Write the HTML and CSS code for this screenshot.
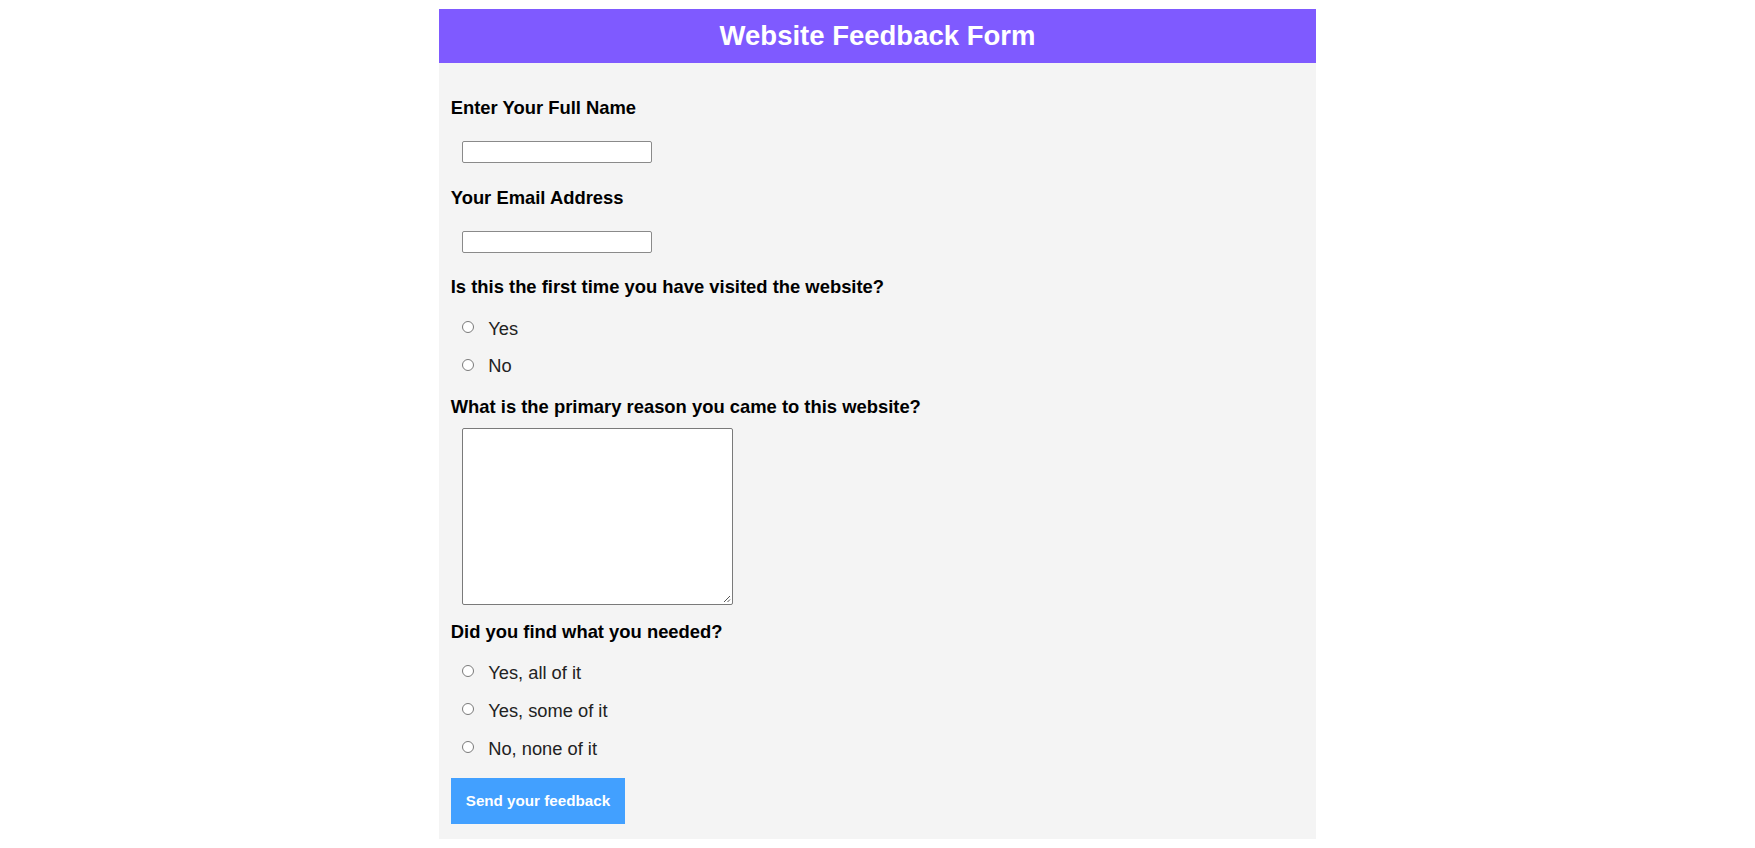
FILE: index.html
```html
<!DOCTYPE html>
<html lang="en">
<head>
<meta charset="utf-8">
<title>Website Feedback Form</title>
<link rel="stylesheet" href="styles.css">
</head>
<body>
<div class="card">
  <header class="card-header">
    <h1 class="title">Website Feedback Form</h1>
  </header>
  <form class="form">
    <label class="q q-first" for="name">Enter Your Full Name</label>
    <input class="text-input" type="text" id="name">

    <label class="q" for="email">Your Email Address</label>
    <input class="text-input" type="email" id="email">

    <div class="q q-group">Is this the first time you have visited the website?</div>
    <div class="options">
      <label class="option"><span class="radio"></span><span>Yes</span></label>
      <label class="option"><span class="radio"></span><span>No</span></label>
    </div>

    <label class="q q-area" for="reason">What is the primary reason you came to this website?</label>
    <div class="area-wrap">
      <textarea class="textarea" id="reason"></textarea>
      <svg class="grip" width="8" height="8" viewBox="0 0 8 8"><path d="M7 1L1 7M7 4.5L4.5 7" stroke="#555" stroke-width="1" fill="none"/></svg>
    </div>

    <div class="q q-found">Did you find what you needed?</div>
    <div class="options options-found">
      <label class="option"><span class="radio"></span><span>Yes, all of it</span></label>
      <label class="option"><span class="radio"></span><span>Yes, some of it</span></label>
      <label class="option"><span class="radio"></span><span>No, none of it</span></label>
    </div>

    <div class="actions">
      <button class="submit" type="button">Send your feedback</button>
    </div>
  </form>
</div>
</body>
</html>
```

FILE: styles.css
```css
html, body {
  margin: 0;
  padding: 0;
  background: #ffffff;
}

body {
  padding-top: 9px;
  font-family: "Liberation Sans", Arial, sans-serif;
}

.card {
  width: 50%;
  margin: 0 auto;
  background: #f4f4f4;
}

.card-header {
  height: 54px;
  background: #7f5aff;
  display: flex;
  align-items: center;
  justify-content: center;
}

.title {
  margin: 0;
  color: #ffffff;
  font-size: 27.5px;
  font-weight: 700;
  line-height: 32px;
}

.form {
  display: flex;
  flex-direction: column;
  align-items: flex-start;
  padding: 0 12px 15px 12px;
}

.q {
  display: block;
  font-size: 18.4px;
  line-height: 21px;
  font-weight: 700;
  color: #000;
  margin-top: 23.5px;
}

.q-first {
  margin-top: 34px;
}

.q-group {
  margin-top: 23.5px;
}

.q-area {
  margin-top: 19.5px;
}

.q-found {
  margin-top: 16.5px;
}

.text-input {
  box-sizing: border-box;
  width: 190px;
  height: 22px;
  margin: 23px 0 0 11.5px;
  padding: 1px 2px;
  border: 1px solid #8a8a8a;
  border-radius: 2px;
  background: #fff;
  font-family: "Liberation Sans", Arial, sans-serif;
  font-size: 13px;
}

.options {
  display: flex;
  flex-direction: column;
  gap: 16.5px;
  margin-top: 20.5px;
  padding-left: 11.5px;
}

.options-found {
  gap: 17px;
  margin-top: 19.5px;
}

.option {
  display: flex;
  align-items: center;
  gap: 14px;
  height: 21px;
  font-size: 18.3px;
  line-height: 21px;
  color: #222;
}

.radio {
  box-sizing: border-box;
  width: 12px;
  height: 12px;
  border: 1px solid #7a7a7a;
  border-radius: 50%;
  background: #fff;
  flex: none;
  margin-top: -2px;
}

.area-wrap {
  position: relative;
  margin: 11px 0 0 11.5px;
  width: 271px;
  height: 177px;
}

.textarea {
  box-sizing: border-box;
  display: block;
  width: 271px;
  height: 177px;
  margin: 0;
  border: 1px solid #7a7a7a;
  border-radius: 2px;
  background: #fff;
  resize: none;
  font-family: "Liberation Sans", Arial, sans-serif;
}

.grip {
  position: absolute;
  right: 2px;
  bottom: 2px;
}

.actions {
  margin-top: 19.5px;
}

.submit {
  display: block;
  height: 45.5px;
  padding: 0 15px;
  border: 0;
  background: #42a0ff;
  color: #fff;
  font-family: "Liberation Sans", Arial, sans-serif;
  font-size: 15.2px;
  font-weight: 700;
  cursor: pointer;
}
```
